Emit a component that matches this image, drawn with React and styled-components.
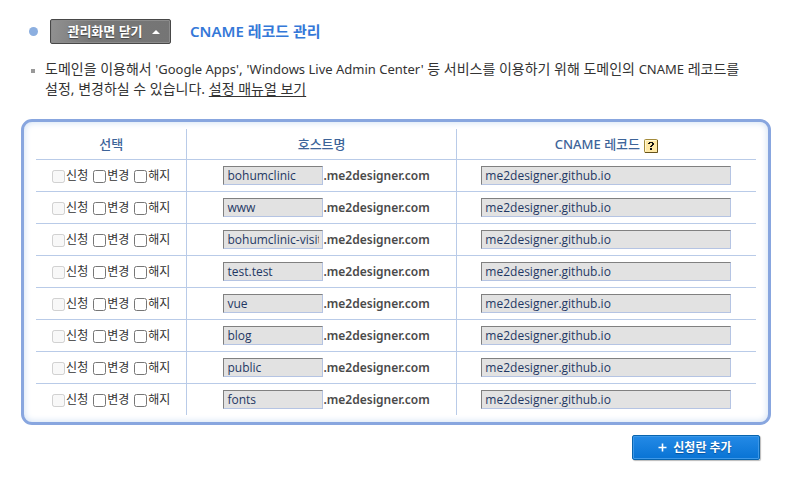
import React from "react";
import styled, { createGlobalStyle } from "styled-components";

const GlobalStyle = createGlobalStyle`
  *, *::before, *::after { box-sizing: border-box; }
  body {
    margin: 0;
    background: #fff;
    color: #333;
    font: 12px/18px "Noto Sans", "Noto Sans CJK KR", sans-serif;
  }
  button, input { font: inherit; }
`;

const Page = styled.main`
  padding: 19px 19px 22px 21px;
`;

const TitleBar = styled.header`
  display: flex;
  align-items: center;
  height: 25px;
  padding-left: 8px;
`;

const Dot = styled.span`
  width: 9px;
  height: 9px;
  margin-right: 12px;
  border-radius: 50%;
  background: #8cafe0;
`;

const CloseButton = styled.button`
  display: flex;
  align-items: center;
  justify-content: center;
  gap: 9px;
  width: 121px;
  height: 25px;
  padding: 0 0 0 6px;
  border: 1px solid #484848;
  border-radius: 2px;
  background: linear-gradient(100deg, #929292, #777 35%, #757575);
  box-shadow: inset 0 0 0 1px #8c8c8c;
  color: #fff;
  font-size: 13px;
  font-weight: 700;
  line-height: 23px;
  white-space: nowrap;
  text-shadow: 0 1px 1px #444;
  cursor: pointer;
`;

const Title = styled.h1`
  margin: 0 0 0 19px;
  color: #3478d8;
  font-size: 15px;
  font-weight: 600;
  line-height: 25px;
`;

const Notice = styled.ul`
  margin: 0;
  padding: 15px 0 0 10px;
  list-style: none;
`;

const NoticeItem = styled.li`
  display: flex;
  gap: 10px;
  font-size: 14px;
  line-height: 20px;
  word-break: keep-all;

  &::before {
    content: "";
    flex: none;
    width: 4px;
    height: 4px;
    margin-top: 10px;
    background: #999;
  }
`;

const ServiceName = styled.span`
  font-size: 13px;
  line-height: 18px;
`;

const ManualLink = styled.a`
  color: inherit;
  text-underline-offset: 2px;
`;

const Panel = styled.section`
  margin-top: 20px;
  padding: 7px 12px;
  border: 3px solid #88a6df;
  border-radius: 11px;
  box-shadow: inset 0 0 6px 1px #d5e3f5;
`;

const RecordTable = styled.table`
  width: 100%;
  table-layout: fixed;
  border-collapse: separate;
  border-spacing: 0;
`;

const Column = styled.col`
  width: ${({ $width }) => $width};
`;

const HeadCell = styled.th`
  height: 31px;
  padding: 0;
  border-bottom: 1px solid #b9cbe8;
  color: #3d6499;
  font-size: 13px;
  font-weight: 500;
  line-height: 18px;

  & + & { border-left: 1px solid #b9cbe8; }
`;

const HeadContent = styled.div`
  display: flex;
  align-items: center;
  justify-content: center;
  gap: 4px;
`;

const HelpButton = styled.button`
  display: flex;
  width: 14px;
  height: 14px;
  margin-top: 4px;
  padding: 0;
  border: 0;
  background: none;
  cursor: pointer;
`;

const Cell = styled.td`
  height: 32px;
  padding: 0;
  border-bottom: 1px solid #b9cbe8;

  & + & { border-left: 1px solid #b9cbe8; }
  tr:last-child > & { height: 31px; border-bottom: 0; }
`;

const CellContent = styled.div`
  display: flex;
  align-items: center;
  justify-content: ${({ $start }) => ($start ? "flex-start" : "center")};
  gap: ${({ $gap }) => $gap || "0"};
  padding-left: ${({ $start }) => ($start ? "36px" : "0")};
  white-space: nowrap;
`;

const Option = styled.label`
  display: flex;
  align-items: center;
`;

const Check = styled.input`
  width: 13px;
  height: 13px;
  margin: 2px 1px 0 0;
`;

const Field = styled.input`
  width: ${({ $width }) => $width};
  height: 19px;
  padding: 0 3px;
  border: 1px solid #b5c4e3;
  border-top-color: #808080;
  border-left-color: #808080;
  border-radius: 0;
  background: #e2e2e2;
  color: #1f3864;
  font-family: "Open Sans", "Noto Sans CJK KR", sans-serif;
  outline: none;
`;

const Domain = styled.span`
  color: #4a4a4a;
  font-weight: 600;
`;

const Actions = styled.div`
  display: flex;
  justify-content: flex-end;
  padding: 10px 11px 0 0;
`;

const AddButton = styled.button`
  display: flex;
  align-items: center;
  justify-content: center;
  gap: 6px;
  width: 128px;
  height: 25px;
  padding: 0 2px 0 0;
  border: 1px solid #0864ae;
  border-radius: 2px;
  background: linear-gradient(#248ae6, #0873d4);
  box-shadow: inset 0 0 0 1px #3d98e8, 1px 1px 1px #bbb;
  color: #fff;
  font-size: 12px;
  font-weight: 700;
  line-height: 23px;
  white-space: nowrap;
  text-shadow: 0 1px 1px #07519b;
  cursor: pointer;
`;

const hosts = [
  "bohumclinic",
  "www",
  "bohumclinic-visits",
  "test.test",
  "vue",
  "blog",
  "public",
  "fonts",
];

const options = [
  { label: "신청", disabled: true },
  { label: "변경" },
  { label: "해지" },
];

function HelpIcon() {
  return (
    <svg width="14" height="14" viewBox="0 0 14 14" aria-hidden="true">
      <rect x="0.5" y="0.5" width="13" height="13" rx="1" fill="#ffe9a6" stroke="#a38b3c" />
      <path d="M1.5 12V1.5H12" fill="none" stroke="#fff8d8" />
      <path d="M1 13.5H13.5V1" fill="none" stroke="#66521b" />
      <path
        d="M5 3h4v1h1v2h-1v1h-1v1h-2v-1h1v-1h1v-2h-2v1h-2v-1h1zM6 9h2v2h-2z"
        fill="#111"
      />
    </svg>
  );
}

function RecordRow({ host }) {
  return (
    <tr>
      <Cell>
        <CellContent $gap="5px">
          {options.map(({ label, disabled }) => (
            <Option key={label}>
              <Check type="checkbox" disabled={disabled} />
              {label}
            </Option>
          ))}
        </CellContent>
      </Cell>
      <Cell>
        <CellContent $start>
          <Field $width="100px" aria-label="호스트명" defaultValue={host} readOnly />
          <Domain>.me2designer.com</Domain>
        </CellContent>
      </Cell>
      <Cell>
        <CellContent>
          <Field
            $width="250px"
            aria-label="CNAME 레코드"
            defaultValue="me2designer.github.io"
            readOnly
          />
        </CellContent>
      </Cell>
    </tr>
  );
}

export default function App() {
  return (
    <Page>
      <GlobalStyle />
      <TitleBar>
        <Dot />
        <CloseButton type="button">
          관리화면 닫기
          <svg width="8" height="4" viewBox="0 0 8 4" aria-hidden="true">
            <path d="M0 4L4 0L8 4Z" fill="#fff" />
          </svg>
        </CloseButton>
        <Title>CNAME 레코드 관리</Title>
      </TitleBar>

      <Notice>
        <NoticeItem>
          <span>
            도메인을 이용해서 <ServiceName>'Google Apps'</ServiceName>,{" "}
            <ServiceName>'Windows Live Admin Center'</ServiceName> 등 서비스를
            이용하기 위해 도메인의 <ServiceName>CNAME</ServiceName> 레코드를
            {" "}설정, 변경하실 수 있습니다.{" "}
            <ManualLink href="#manual">설정 매뉴얼 보기</ManualLink>
          </span>
        </NoticeItem>
      </Notice>

      <Panel>
        <RecordTable>
          <colgroup>
            <Column $width="20.9%" />
            <Column $width="37.4%" />
            <Column $width="41.7%" />
          </colgroup>
          <thead>
            <tr>
              <HeadCell scope="col">선택</HeadCell>
              <HeadCell scope="col">호스트명</HeadCell>
              <HeadCell scope="col">
                <HeadContent>
                  CNAME 레코드
                  <HelpButton type="button" aria-label="도움말">
                    <HelpIcon />
                  </HelpButton>
                </HeadContent>
              </HeadCell>
            </tr>
          </thead>
          <tbody>
            {hosts.map((host) => (
              <RecordRow key={host} host={host} />
            ))}
          </tbody>
        </RecordTable>
      </Panel>

      <Actions>
        <AddButton type="button">
          <svg width="9" height="9" viewBox="0 0 9 9" aria-hidden="true">
            <path d="M4.5 0.5V8.5M0.5 4.5H8.5" stroke="#fff" strokeWidth="1.6" />
          </svg>
          신청란 추가
        </AddButton>
      </Actions>
    </Page>
  );
}
